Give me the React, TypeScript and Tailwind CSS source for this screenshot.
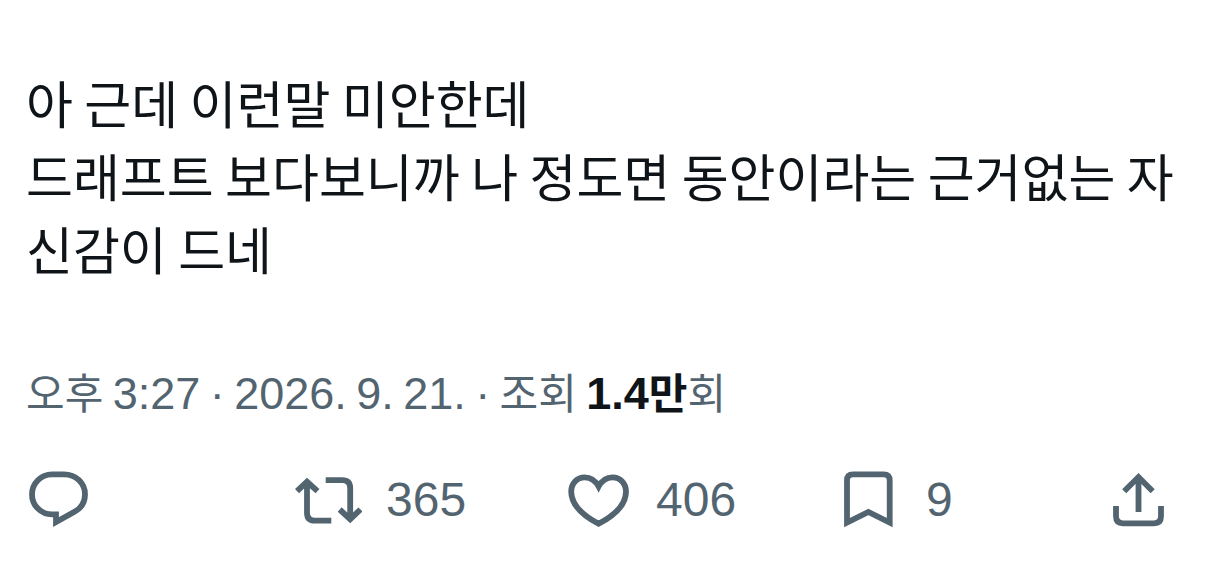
import type { ReactNode } from "react";

type ActionProps = {
  label: string;
  count?: string;
  className?: string;
  children: ReactNode;
};

function Icon({ children }: { children: ReactNode }) {
  return (
    <svg
      viewBox="0 0 68 68"
      className="size-17 shrink-0"
      fill="none"
      stroke="currentColor"
      strokeWidth="5.8"
      strokeMiterlimit="10"
      aria-hidden="true"
    >
      {children}
    </svg>
  );
}

function Action({ label, count, className = "", children }: ActionProps) {
  return (
    <div className={className}>
      <button
        type="button"
        aria-label={count ? `${label} ${count}` : label}
        className="flex cursor-pointer items-center gap-6"
      >
        <Icon>{children}</Icon>
        {count && <span>{count}</span>}
      </button>
    </div>
  );
}

function Num({ children }: { children: ReactNode }) {
  return <span className="font-['Liberation_Sans',sans-serif] text-[45px]">{children}</span>;
}

export default function App() {
  return (
    <article className="w-full bg-white pt-[66px] font-['Noto_Sans_CJK_KR',sans-serif] text-[#0f1419]">
      <p className="px-[26px] text-[51px] leading-[73px]">
        아 근데 이런말 미안한데
        <br />
        드래프트 보다보니까 나 정도면 동안이라는 근거없는 자신감이 드네
      </p>
      <div className="mt-[78px] px-[26px] text-[42px] leading-[56px] text-[#536471]">
        <a href="#status">
          <time dateTime="2026-09-21T15:27">
            오후 <Num>3:27</Num> <Num>·</Num> <Num>2026.</Num> <Num>9.</Num> <Num>21.</Num>
          </time>
        </a>{" "}
        <Num>·</Num> 조회{" "}
        <strong className="font-bold text-[#0f1419]">
          <Num>1.4</Num>만
        </strong>
        회
      </div>
      <div className="mt-11 flex pr-[34px] pl-6 font-['Liberation_Sans',sans-serif] text-5xl text-[#536471]">
        <Action label="답글" className="flex-1">
          <path d="M28 8.4H40C52 8.4 61 17.2 61 28.4C61 36 57 42.2 50.5 45.8L32 56V48.4H28C17 48.4 8 39.5 8 28.4S17 8.4 28 8.4Z" />
        </Action>
        <Action label="재게시" count="365" className="flex-1">
          <path d="M3 25.2L13 15.8L23.5 25.2M13 16V46.7Q13 54.7 21 54.7H37.3M31.7 14.2H48.2Q56.2 14.2 56.2 22.2V53M45.7 43.5L56.2 53.2L66.5 43.5" />
        </Action>
        <Action label="마음에 들어요" count="406" className="flex-1">
          <path d="M34.6 20.5C31.4 14.5 26.4 11.3 20.7 11.3C12.9 11.3 7.2 17.5 7.2 25.5C7.2 37.5 17 48.5 34.6 57.8C52.3 48.5 62 37.5 62 25.5C62 17.5 56.3 11.3 48.5 11.3C42.8 11.3 37.8 14.5 34.6 20.5Z" />
        </Action>
        <Action label="북마크" count="9" className="flex-1">
          <path d="M13 56.5V14.3Q13 8.3 19 8.3H49.7Q55.7 8.3 55.7 14.3V56.5L34.4 46Z" />
        </Action>
        <Action label="공유">
          <path d="M20.2 25.2L34.5 11L48.7 25.2M34.5 12V46M12 40V50.3Q12 57.3 19 57.3H50Q57 57.3 57 50.3V40" />
        </Action>
      </div>
    </article>
  );
}
